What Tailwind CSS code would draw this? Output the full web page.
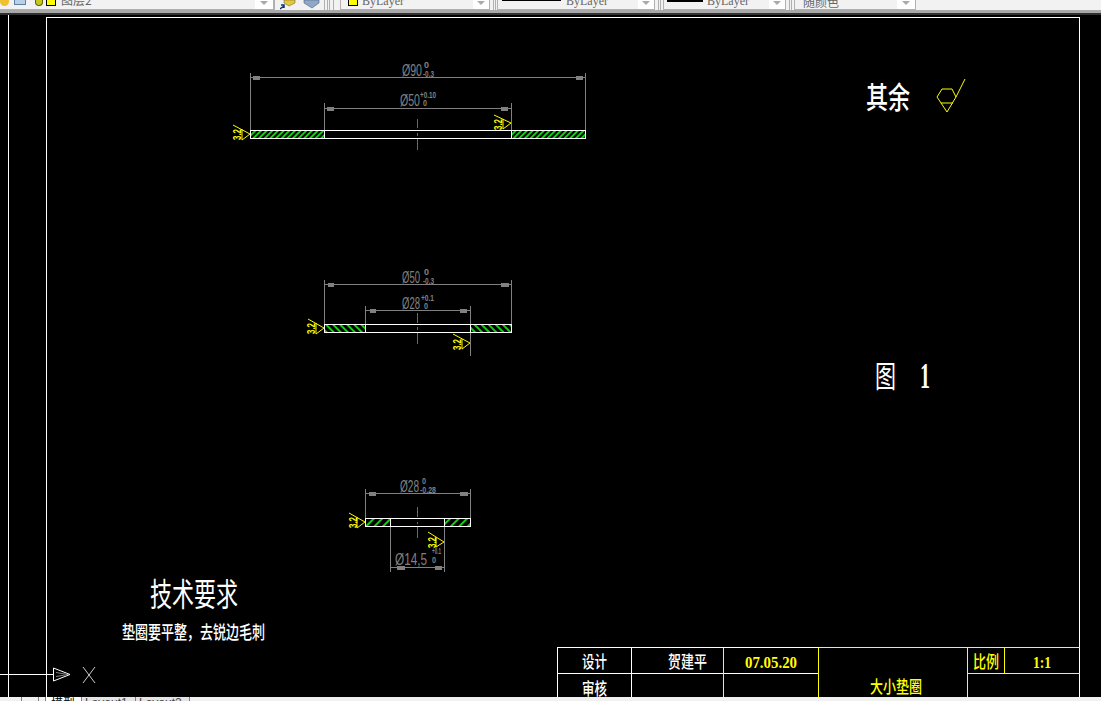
<!doctype html>
<html lang="zh">

<head>
    <meta charset="UTF-8" />
    <title>大小垫圈</title>
    <script src="https://cdn.jsdelivr.net/npm/@tailwindcss/browser@4"></script>
</head>

<body class="bg-black overflow-hidden">
    <div class="flex flex-col h-[701px] w-[1101px] font-['Liberation_Sans',sans-serif]">

        <!-- toolbar -->
        <div class="flex flex-col h-[15px] shrink-0">
            <div class="flex h-[10px] bg-[#f2f2f2] overflow-hidden text-[12px] leading-[12px] text-[#666]">
                <!-- layer combo -->
                <div class="relative flex w-[275px] shrink-0 border-r-2 border-b border-[#b0b0b0]">
                    <div class="w-[9px] h-[6px] rounded-b-full bg-[#f0c030]"></div>
                    <div class="w-[12px] h-[5px] ml-[5px] bg-[#b8d0e8] border-b border-x border-[#6080a0]"></div>
                    <div class="w-[8px] h-[6px] ml-[9px] rounded-b bg-[#c8c820] border-b border-x border-[#606000]"></div>
                    <div class="w-[10px] h-[6px] ml-[3px] bg-[#ffff00] border-b border-x border-black"></div>
                    <span class="ml-[5px] -mt-[6px] font-['Noto_Sans_CJK_SC',sans-serif]">图层2</span>
                    <div class="absolute right-0 top-0 flex justify-center w-[18px] h-full bg-white">
                        <div class="w-0 h-0 mt-[1px] border-x-[4px] border-t-[4px] border-x-transparent border-t-[#aaa]"></div>
                    </div>
                </div>
                <!-- layer icons -->
                <div class="flex w-[50px] shrink-0 pl-[5px] gap-[7px] border-r border-[#b0b0b0]">
                    <svg class="w-[16px] h-[10px]" viewBox="0 0 16 10">
                        <path d="M4 0H15V3L9 6L4 3Z" fill="#e0c840" stroke="#807020" stroke-width="0.600" />
                        <path d="M0 9L4 6M1 5H4V8" fill="none" stroke="#103080" stroke-width="1.500" />
                    </svg>
                    <svg class="w-[17px] h-[10px]" viewBox="0 0 17 10">
                        <path d="M1 0H16V3L9 8L1 3Z" fill="#8fa8c8" stroke="#506080" stroke-width="0.600" />
                    </svg>
                </div>
                <!-- grip -->
                <div class="w-[3px] shrink-0 ml-[2px] border-x border-[#b0b0b0]"></div>
                <div class="w-[3px] shrink-0 ml-[1px] border-r border-[#b0b0b0]"></div>
                <!-- colour combo -->
                <div class="relative flex w-[150px] shrink-0 ml-[6px] pl-[7px] border-x border-b border-[#b0b0b0]">
                    <div class="w-[10px] h-[6px] bg-[#ffff00] border-b border-x border-black"></div>
                    <span class="ml-[4px] -mt-[5px] font-['Liberation_Serif',serif]">ByLayer</span>
                    <div class="absolute right-0 top-0 flex justify-center w-[16px] h-full bg-white">
                        <div class="w-0 h-0 mt-[1px] border-x-[4px] border-t-[4px] border-x-transparent border-t-[#aaa]"></div>
                    </div>
                </div>
                <div class="w-[3px] shrink-0 ml-[3px] border-x border-[#b0b0b0]"></div>
                <!-- linetype combo -->
                <div class="relative flex w-[158px] shrink-0 ml-[1px] pl-[4px] border-x border-b border-[#b0b0b0]">
                    <div class="w-[59px] h-[1px] bg-black"></div>
                    <span class="ml-[5px] -mt-[5px] font-['Liberation_Serif',serif]">ByLayer</span>
                    <div class="absolute right-0 top-0 flex justify-center w-[16px] h-full bg-white">
                        <div class="w-0 h-0 mt-[1px] border-x-[4px] border-t-[4px] border-x-transparent border-t-[#aaa]"></div>
                    </div>
                </div>
                <div class="w-[3px] shrink-0 ml-[3px] border-x border-[#b0b0b0]"></div>
                <!-- lineweight combo -->
                <div class="relative flex w-[123px] shrink-0 ml-[2px] pl-[3px] border-x border-b border-[#b0b0b0]">
                    <div class="w-[36px] h-[2px] bg-black"></div>
                    <span class="ml-[4px] -mt-[5px] font-['Liberation_Serif',serif]">ByLayer</span>
                    <div class="absolute right-0 top-0 flex justify-center w-[16px] h-full bg-white">
                        <div class="w-0 h-0 mt-[1px] border-x-[4px] border-t-[4px] border-x-transparent border-t-[#aaa]"></div>
                    </div>
                </div>
                <div class="w-[3px] shrink-0 ml-[3px] border-x border-[#b0b0b0]"></div>
                <!-- plot style combo -->
                <div class="relative flex w-[122px] shrink-0 ml-[2px] pl-[8px] border-x border-b border-[#b0b0b0]">
                    <span class="-mt-[4px] font-['Noto_Sans_CJK_SC',sans-serif]">随颜色</span>
                    <div class="absolute right-0 top-0 flex justify-center w-[18px] h-full bg-white">
                        <div class="w-0 h-0 mt-[1px] border-x-[4px] border-t-[4px] border-x-transparent border-t-[#aaa]"></div>
                    </div>
                </div>
            </div>
            <div class="h-[3px] bg-[#a8a8a8]"></div>
            <div class="h-[2px] bg-[#303030]"></div>
        </div>

        <!-- drawing area -->
        <svg class="block w-[1101px] h-[682px] shrink-0" viewBox="0 15 1101 682" xmlns="http://www.w3.org/2000/svg" shape-rendering="crispEdges">
            <defs>
                <pattern id="hatch1" width="4" height="4" patternUnits="userSpaceOnUse" patternTransform="rotate(45)">
                    <rect width="1.800" height="4" fill="#10d010" />
                </pattern>
                <pattern id="hatch2" width="5" height="5" patternUnits="userSpaceOnUse" patternTransform="rotate(-45)">
                    <rect width="2" height="5" fill="#10d010" />
                </pattern>
                <pattern id="hatch3" width="6" height="6" patternUnits="userSpaceOnUse" patternTransform="rotate(45)">
                    <rect width="2" height="6" fill="#10d010" />
                </pattern>
            </defs>

            <!-- sheet frame -->
            <g stroke="#fff" fill="none">
                <path d="M8.500 15V697M46.500 697V17.500H1079.500V697" />
                <path d="M0 674.500H53" />
                <g shape-rendering="auto">
                    <path d="M53.500 668L70 674.500L53.500 681Z" />
                    <path d="M83 667L95 683M95 667L83 683" stroke-width="0.800" />
                </g>
                <path d="M56 672.500L68 674.500M56 676.500L68 674.500" stroke="#808080" shape-rendering="auto" />
            </g>

            <!-- title block -->
            <g fill="none">
                <path d="M557.500 697V647.500H818.500M557.500 673.500H818.500M631.500 647.500V697" stroke="#fff" />
                <path d="M723.500 647.500V697M818.500 647.500V697M818.500 647.500H1079.500M967.500 647.500V697M967.500 673.500H1079.500M1004.500 647.500V673.500" stroke="#ff0" />
            </g>
            <g font-family="Noto Sans CJK SC, sans-serif" font-size="17" font-weight="500">
                <text x="582" y="668" fill="#fff" textLength="25" lengthAdjust="spacingAndGlyphs">设计</text>
                <text x="668" y="668" fill="#fff" textLength="39" lengthAdjust="spacingAndGlyphs">贺建平</text>
                <text x="582" y="695" fill="#fff" textLength="25" lengthAdjust="spacingAndGlyphs">审核</text>
                <text x="973" y="668" fill="#ff0" textLength="26" lengthAdjust="spacingAndGlyphs">比例</text>
                <text x="870" y="693" fill="#ff0" textLength="52" lengthAdjust="spacingAndGlyphs">大小垫圈</text>
            </g>
            <g font-family="Liberation Serif, serif" font-size="16" font-weight="700" fill="#ff0">
                <text x="745" y="668" textLength="52" lengthAdjust="spacingAndGlyphs">07.05.20</text>
                <text x="1033" y="668" textLength="18" lengthAdjust="spacingAndGlyphs">1:1</text>
            </g>

            <!-- notes -->
            <g font-family="Noto Sans CJK SC, sans-serif" fill="#fff">
                <text x="150" y="606" font-size="32" textLength="88" lengthAdjust="spacingAndGlyphs">技术要求</text>
                <text x="122" y="639" font-size="18" font-weight="500" textLength="143" lengthAdjust="spacingAndGlyphs">垫圈要平整，去锐边毛刺</text>
                <text x="866" y="108" font-size="30" font-weight="500" textLength="44" lengthAdjust="spacingAndGlyphs">其余</text>
                <text x="875" y="387" font-size="30" textLength="21" lengthAdjust="spacingAndGlyphs">图</text>
                <text x="920" y="388" font-size="36" font-weight="700" font-family="Liberation Serif, serif" textLength="10" lengthAdjust="spacingAndGlyphs">1</text>
            </g>
            <!-- roughness mark top right -->
            <path d="M937 97L942 89H952L956 97L947 112ZM941 103H953M956 97L965 79" fill="none" stroke="#ff0" shape-rendering="auto" />

            <!-- part 1 -->
            <g fill="none" stroke="#808080">
                <path d="M250.500 73V130M585.500 73V130M250 77.500H585M324.500 103V130M511.500 103V130M324 108.500H511" />
            </g>
            <g fill="#808080">
                <rect x="253" y="76" width="7" height="4" /><rect x="576" y="76" width="7" height="4" />
                <rect x="327" y="107" width="7" height="4" /><rect x="501" y="107" width="7" height="4" />
            </g>
            <g font-family="Liberation Sans, sans-serif" fill="#808080" font-size="17">
                <text x="402" y="76" textLength="20" lengthAdjust="spacingAndGlyphs">Ø90</text>
                <text x="400" y="106" textLength="20" lengthAdjust="spacingAndGlyphs">Ø50</text>
            </g>
            <g font-family="Liberation Sans, sans-serif" fill="#808080" font-size="9" font-weight="700">
                <text x="424" y="68" textLength="5" lengthAdjust="spacingAndGlyphs">0</text>
                <text x="423" y="77" textLength="11" lengthAdjust="spacingAndGlyphs">-0.3</text>
                <text x="420" y="98" textLength="16" lengthAdjust="spacingAndGlyphs">+0.10</text>
                <text x="423" y="106" textLength="4" lengthAdjust="spacingAndGlyphs">0</text>
            </g>
            <path d="M417.500 119V128M417.500 133V136M417.500 139V150" stroke="#f0f" />
            <rect x="250" y="130" width="74" height="8" fill="url(#hatch1)" />
            <rect x="511" y="130" width="74" height="8" fill="url(#hatch1)" />
            <path d="M250.500 130.500H585.500V138.500H250.500ZM324.500 130V138M511.500 130V138" fill="none" stroke="#fff" />

            <!-- part 2 -->
            <g fill="none" stroke="#808080">
                <path d="M324.500 280V324M511.500 280V324M324 284.500H511M365.500 306V324M470.500 306V356M365 310.500H470" />
            </g>
            <g fill="#808080">
                <rect x="328" y="283" width="6" height="4" /><rect x="501" y="283" width="8" height="4" />
                <rect x="370" y="309" width="6" height="4" /><rect x="460" y="309" width="7" height="4" />
            </g>
            <g font-family="Liberation Sans, sans-serif" fill="#808080" font-size="17">
                <text x="402" y="283" textLength="18" lengthAdjust="spacingAndGlyphs">Ø50</text>
                <text x="402" y="309" textLength="18" lengthAdjust="spacingAndGlyphs">Ø28</text>
            </g>
            <g font-family="Liberation Sans, sans-serif" fill="#808080" font-size="9" font-weight="700">
                <text x="424" y="275" textLength="5" lengthAdjust="spacingAndGlyphs">0</text>
                <text x="423" y="284" textLength="11" lengthAdjust="spacingAndGlyphs">-0.3</text>
                <text x="421" y="301" textLength="13" lengthAdjust="spacingAndGlyphs">+0.1</text>
                <text x="424" y="309" textLength="4" lengthAdjust="spacingAndGlyphs">0</text>
            </g>
            <path d="M417.500 313V323M417.500 327V330M417.500 333V344" stroke="#f0f" />
            <rect x="324" y="324" width="41" height="8" fill="url(#hatch2)" />
            <rect x="470" y="324" width="41" height="8" fill="url(#hatch2)" />
            <path d="M324.500 324.500H511.500V332.500H324.500ZM365.500 324V332M470.500 324V332" fill="none" stroke="#fff" />

            <!-- part 3 -->
            <g fill="none" stroke="#808080">
                <path d="M365.500 489V518M470.500 489V518M365 493.500H470M390.500 527V572M444.500 527V572M390 567.500H444" />
            </g>
            <g fill="#808080">
                <rect x="369" y="492" width="7" height="4" /><rect x="460" y="492" width="8" height="4" />
                <rect x="397" y="566" width="8" height="4" /><rect x="435" y="566" width="7" height="4" />
            </g>
            <g font-family="Liberation Sans, sans-serif" fill="#808080" font-size="17">
                <text x="400" y="492" textLength="19" lengthAdjust="spacingAndGlyphs">Ø28</text>
                <text x="395" y="565" textLength="32" lengthAdjust="spacingAndGlyphs">Ø14,5</text>
            </g>
            <g font-family="Liberation Sans, sans-serif" fill="#808080" font-size="9" font-weight="700">
                <text x="422" y="484" textLength="4" lengthAdjust="spacingAndGlyphs">0</text>
                <text x="420" y="493" textLength="16" lengthAdjust="spacingAndGlyphs">-0.28</text>
                <text x="432" y="554" textLength="9" lengthAdjust="spacingAndGlyphs">+0.1</text>
                <text x="432" y="563" textLength="4" lengthAdjust="spacingAndGlyphs">0</text>
            </g>
            <path d="M417.500 507V517M417.500 522V524M417.500 527V538" stroke="#f0f" />
            <rect x="365" y="518" width="25" height="8" fill="url(#hatch3)" />
            <rect x="445" y="518" width="25" height="8" fill="url(#hatch3)" />
            <path d="M365.500 518.500H470.500V526.500H365.500ZM390.500 518V526M444.500 518V526" fill="none" stroke="#fff" />

            <!-- surface marks -->
            <g fill="none" stroke="#ff0" shape-rendering="auto">
                <path d="M233 125L250 134L242 140V129" />
                <path d="M494 115L511 123L503 129V119" />
                <path d="M308 319L324 328L316 334V323" />
                <path d="M453 334L470 343L462 349V339" />
                <path d="M349 513L365 522L357 528V517" />
                <path d="M428 532L444 542L436 547V537" />
            </g>
            <g fill="#ff0" font-family="Liberation Sans, sans-serif" font-weight="700" font-size="11">
                <text transform="translate(241 140) rotate(-90)" textLength="11" lengthAdjust="spacingAndGlyphs">3.2</text>
                <text transform="translate(502 130) rotate(-90)" textLength="11" lengthAdjust="spacingAndGlyphs">3.2</text>
                <text transform="translate(315 334) rotate(-90)" textLength="11" lengthAdjust="spacingAndGlyphs">3.2</text>
                <text transform="translate(461 350) rotate(-90)" textLength="11" lengthAdjust="spacingAndGlyphs">3.2</text>
                <text transform="translate(357 528) rotate(-90)" textLength="11" lengthAdjust="spacingAndGlyphs">3.2</text>
                <text transform="translate(436 548) rotate(-90)" textLength="11" lengthAdjust="spacingAndGlyphs">3.2</text>
            </g>
        </svg>

        <!-- layout tabs -->
        <div class="flex h-[4px] shrink-0 bg-[#f0f0f0] overflow-hidden text-[12px] leading-[12px]">
            <div class="w-[22px] border-r border-[#808080]"></div>
            <div class="w-[17px] border-r border-[#808080]"></div>
            <div class="w-[37px] ml-[6px] border-x border-[#808080] pl-[5px] bg-white text-black font-['Noto_Sans_CJK_SC',sans-serif]">模型</div>
            <div class="w-[54px] border-r border-[#808080] pl-[3px] bg-[#e4e4e4] text-[#444]">Layout1</div>
            <div class="w-[54px] border-r border-[#808080] pl-[3px] bg-[#e4e4e4] text-[#444]">Layout2</div>
        </div>
    </div>
</body>

</html>
